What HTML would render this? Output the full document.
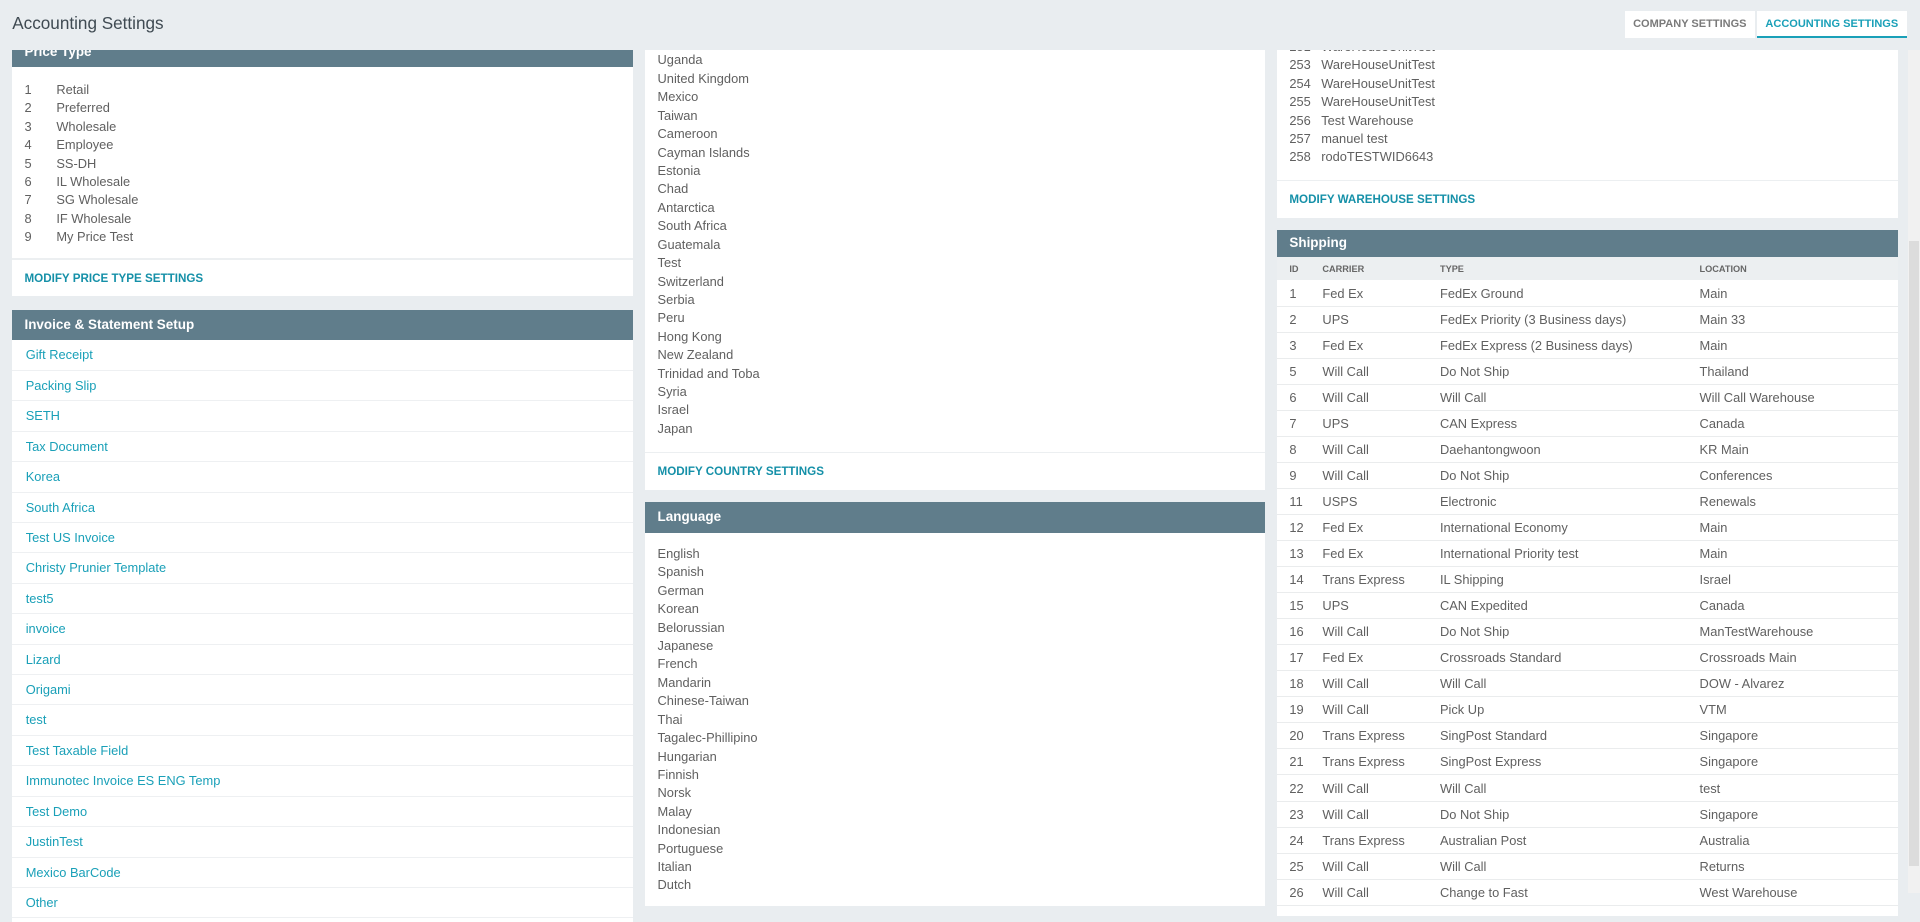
<!DOCTYPE html>
<html><head><meta charset="utf-8">
<style>
html,body{margin:0;padding:0}
body{width:1568px;height:729px;overflow:hidden;background:#e9edf0;font-family:"Liberation Sans",sans-serif;color:#606060;font-size:10.5px;position:relative;zoom:1.22449}
.top{position:absolute;left:0;top:0;width:1568px;height:41px;background:#e9edf0;z-index:5}
.top h1{position:absolute;left:10px;top:11px;margin:0;font-size:14px;font-weight:normal;color:#3f4a52}
.tab{position:absolute;top:9px;height:22px;background:#fff;font-size:9px;font-weight:bold;line-height:22px;text-align:center;color:#7a7a7a}
.tab.a{color:#1aa0b8;border-bottom:2px solid #1aa0b8;height:20px}
.card{position:absolute;background:#fff}
.hd{background:#607d8b;color:#fff;font-weight:bold;font-size:11px;padding-left:10px;box-sizing:border-box}
.lst{position:absolute;line-height:15.05px}
.lnk{position:absolute;color:#1590a8;font-weight:bold;font-size:9.5px}
.div{position:absolute;left:0;right:0;height:1px;background:#eceff1}
.inv div{height:24.85px;line-height:24.85px;border-bottom:1px solid #eef0f2;box-sizing:border-box;padding-left:11px;color:#1aa0b8}
table{border-collapse:collapse;width:100%}
td,th{padding:0;text-align:left}
th{font-size:7.5px;color:#666;height:19px;background:#eceff1;font-weight:bold}
td{height:21.26px;border-bottom:1px solid #eaeced;box-sizing:border-box}
.c0{padding-left:10px;width:27px}
.sb{position:absolute;left:1558px;top:41px;width:10px;height:688px;background:#f1f1f1}
.sb div{position:absolute;left:1px;top:156px;width:8px;height:510px;background:#dcdcdc}
</style></head><body>
<div class="top"><h1>Accounting Settings</h1>
<div class="tab" style="left:1327px;width:106px">COMPANY SETTINGS</div>
<div class="tab a" style="left:1435px;width:122px">ACCOUNTING SETTINGS</div>
</div>
<div class="sb"><div></div></div>

<div class="card" style="left:10px;top:30px;width:507px;height:212px">
<div class="hd" style="height:25px;line-height:25px">Price Type</div>
<div class="lst" style="left:10px;top:36px">1<br>2<br>3<br>4<br>5<br>6<br>7<br>8<br>9</div>
<div class="lst" style="left:36px;top:36px">Retail<br>Preferred<br>Wholesale<br>Employee<br>SS-DH<br>IL Wholesale<br>SG Wholesale<br>IF Wholesale<br>My Price Test</div>
<div class="div" style="top:181px"></div>
<div class="lnk" style="left:10px;top:192px">MODIFY PRICE TYPE SETTINGS</div>
</div>
<div class="card inv" style="left:10px;top:253px;width:507px;height:500px">
<div class="hd" style="height:25px;line-height:25px;color:#fff;padding-left:10px;border:0">Invoice &amp; Statement Setup</div>
<div>Gift Receipt</div><div>Packing Slip</div><div>SETH</div><div>Tax Document</div><div>Korea</div><div>South Africa</div><div>Test US Invoice</div><div>Christy Prunier Template</div><div>test5</div><div>invoice</div><div>Lizard</div><div>Origami</div><div>test</div><div>Test Taxable Field</div><div>Immunotec Invoice ES ENG Temp</div><div>Test Demo</div><div>JustinTest</div><div>Mexico BarCode</div><div>Other</div>
</div>

<div class="card" style="left:527px;top:0;width:506px;height:400px">
<div class="lst" style="left:10px;top:27px">Nigeria<br>Uganda<br>United Kingdom<br>Mexico<br>Taiwan<br>Cameroon<br>Cayman Islands<br>Estonia<br>Chad<br>Antarctica<br>South Africa<br>Guatemala<br>Test<br>Switzerland<br>Serbia<br>Peru<br>Hong Kong<br>New Zealand<br>Trinidad and Toba<br>Syria<br>Israel<br>Japan</div>
<div class="div" style="top:369px"></div>
<div class="lnk" style="left:10px;top:380px">MODIFY COUNTRY SETTINGS</div>
</div>
<div class="card" style="left:527px;top:410px;width:506px;height:330px">
<div class="hd" style="height:25px;line-height:25px">Language</div>
<div class="lst" style="left:10px;top:35px">English<br>Spanish<br>German<br>Korean<br>Belorussian<br>Japanese<br>French<br>Mandarin<br>Chinese-Taiwan<br>Thai<br>Tagalec-Phillipino<br>Hungarian<br>Finnish<br>Norsk<br>Malay<br>Indonesian<br>Portuguese<br>Italian<br>Dutch</div>
</div>

<div class="card" style="left:1043px;top:0;width:507px;height:178px">
<div class="lst" style="left:10px;top:31px">251<br>253<br>254<br>255<br>256<br>257<br>258</div>
<div class="lst" style="left:36px;top:31px">WareHouseUnitTest<br>WareHouseUnitTest<br>WareHouseUnitTest<br>WareHouseUnitTest<br>Test Warehouse<br>manuel test<br>rodoTESTWID6643</div>
<div class="div" style="top:147px"></div>
<div class="lnk" style="left:10px;top:158px">MODIFY WAREHOUSE SETTINGS</div>
</div>
<div class="card" style="left:1043px;top:188px;width:507px;height:560px">
<div class="hd" style="height:22px;line-height:22px">Shipping</div>
<table>
<tr><th class="c0">ID</th><th style="width:96px">CARRIER</th><th style="width:212px">TYPE</th><th>LOCATION</th></tr>
<tr><td class="c0">1</td><td>Fed Ex</td><td>FedEx Ground</td><td>Main</td></tr>
<tr><td class="c0">2</td><td>UPS</td><td>FedEx Priority (3 Business days)</td><td>Main 33</td></tr>
<tr><td class="c0">3</td><td>Fed Ex</td><td>FedEx Express (2 Business days)</td><td>Main</td></tr>
<tr><td class="c0">5</td><td>Will Call</td><td>Do Not Ship</td><td>Thailand</td></tr>
<tr><td class="c0">6</td><td>Will Call</td><td>Will Call</td><td>Will Call Warehouse</td></tr>
<tr><td class="c0">7</td><td>UPS</td><td>CAN Express</td><td>Canada</td></tr>
<tr><td class="c0">8</td><td>Will Call</td><td>Daehantongwoon</td><td>KR Main</td></tr>
<tr><td class="c0">9</td><td>Will Call</td><td>Do Not Ship</td><td>Conferences</td></tr>
<tr><td class="c0">11</td><td>USPS</td><td>Electronic</td><td>Renewals</td></tr>
<tr><td class="c0">12</td><td>Fed Ex</td><td>International Economy</td><td>Main</td></tr>
<tr><td class="c0">13</td><td>Fed Ex</td><td>International Priority test</td><td>Main</td></tr>
<tr><td class="c0">14</td><td>Trans Express</td><td>IL Shipping</td><td>Israel</td></tr>
<tr><td class="c0">15</td><td>UPS</td><td>CAN Expedited</td><td>Canada</td></tr>
<tr><td class="c0">16</td><td>Will Call</td><td>Do Not Ship</td><td>ManTestWarehouse</td></tr>
<tr><td class="c0">17</td><td>Fed Ex</td><td>Crossroads Standard</td><td>Crossroads Main</td></tr>
<tr><td class="c0">18</td><td>Will Call</td><td>Will Call</td><td>DOW - Alvarez</td></tr>
<tr><td class="c0">19</td><td>Will Call</td><td>Pick Up</td><td>VTM</td></tr>
<tr><td class="c0">20</td><td>Trans Express</td><td>SingPost Standard</td><td>Singapore</td></tr>
<tr><td class="c0">21</td><td>Trans Express</td><td>SingPost Express</td><td>Singapore</td></tr>
<tr><td class="c0">22</td><td>Will Call</td><td>Will Call</td><td>test</td></tr>
<tr><td class="c0">23</td><td>Will Call</td><td>Do Not Ship</td><td>Singapore</td></tr>
<tr><td class="c0">24</td><td>Trans Express</td><td>Australian Post</td><td>Australia</td></tr>
<tr><td class="c0">25</td><td>Will Call</td><td>Will Call</td><td>Returns</td></tr>
<tr><td class="c0">26</td><td>Will Call</td><td>Change to Fast</td><td>West Warehouse</td></tr>
</table>
</div>
</body></html>
